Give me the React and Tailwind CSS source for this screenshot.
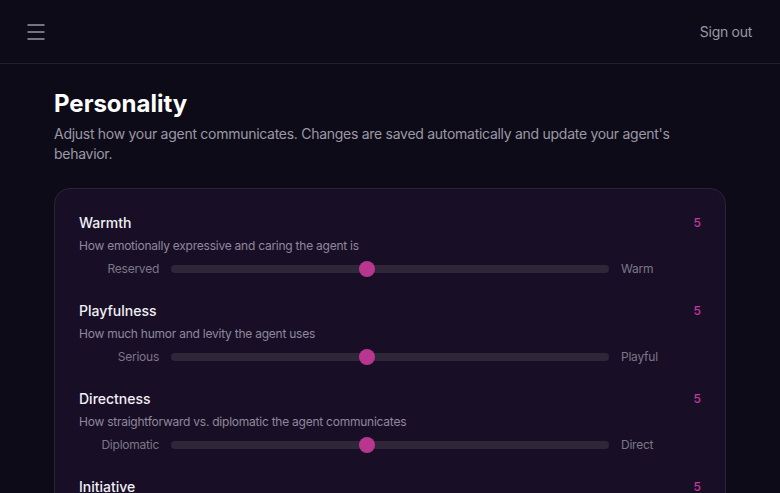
import React from "react";
import { Menu } from "lucide-react";

const traits = [
  { name: "Warmth", desc: "How emotionally expressive and caring the agent is", low: "Reserved", high: "Warm", value: 5 },
  { name: "Playfulness", desc: "How much humor and levity the agent uses", low: "Serious", high: "Playful", value: 5 },
  { name: "Directness", desc: "How straightforward vs. diplomatic the agent communicates", low: "Diplomatic", high: "Direct", value: 5 },
  { name: "Initiative", desc: "How proactively the agent suggests ideas and next steps", low: "Reactive", high: "Proactive", value: 5 },
];

function TraitSlider({ trait }) {
  // range 1..10, thumb 16px
  const pct = (trait.value - 1) / 9;
  return (
    <div>
      <div className="flex items-center justify-between">
        <span className="text-sm font-medium leading-5 text-[#f1eff6]">{trait.name}</span>
        <span className="text-xs font-medium text-[#c2389c]">{trait.value}</span>
      </div>
      <p className="mt-[5px] text-xs leading-4 tracking-[-0.02em] text-[#8e899b]">{trait.desc}</p>
      <div className="mt-[7px] flex items-center gap-3">
        <span className="w-20 text-right text-xs tracking-[-0.02em] text-[#7c7787]">{trait.low}</span>
        <div className="relative h-4 flex-1">
          <div className="absolute left-0 right-0 top-1 h-2 rounded-full bg-[#2d2739]" />
          <div
            className="absolute top-0 h-4 w-4 rounded-full bg-[#b9368f]"
            style={{ left: `calc((100% - 16px) * ${pct})` }}
          />
        </div>
        <span className="w-20 text-xs tracking-[-0.02em] text-[#7c7787]">{trait.high}</span>
      </div>
    </div>
  );
}

export default function App() {
  return (
    <div className="min-h-screen bg-[#0e0b18] font-['Inter',sans-serif]">
      <header className="flex h-16 items-center justify-between border-b border-[#24202e] px-6">
        <button className="text-[#9b98a5]">
          <Menu className="h-6 w-6" strokeWidth={1.5} />
        </button>
        <button className="mr-1 text-sm tracking-[-0.02em] text-[#9b98a5]">Sign out</button>
      </header>

      <main className="mx-auto max-w-2xl pt-6">
        <h1 className="text-2xl font-bold leading-8 text-white">Personality</h1>
        <p className="mt-1 text-sm tracking-[-0.02em] text-[#9c98a6]">
          Adjust how your agent communicates. Changes are saved automatically and update your agent's behavior.
        </p>

        <div className="mt-6 rounded-2xl border border-[#2a2436] bg-[#180f26] p-6">
          <div className="flex flex-col gap-6">
            {traits.map((t) => (
              <TraitSlider key={t.name} trait={t} />
            ))}
          </div>
        </div>
      </main>
    </div>
  );
}
